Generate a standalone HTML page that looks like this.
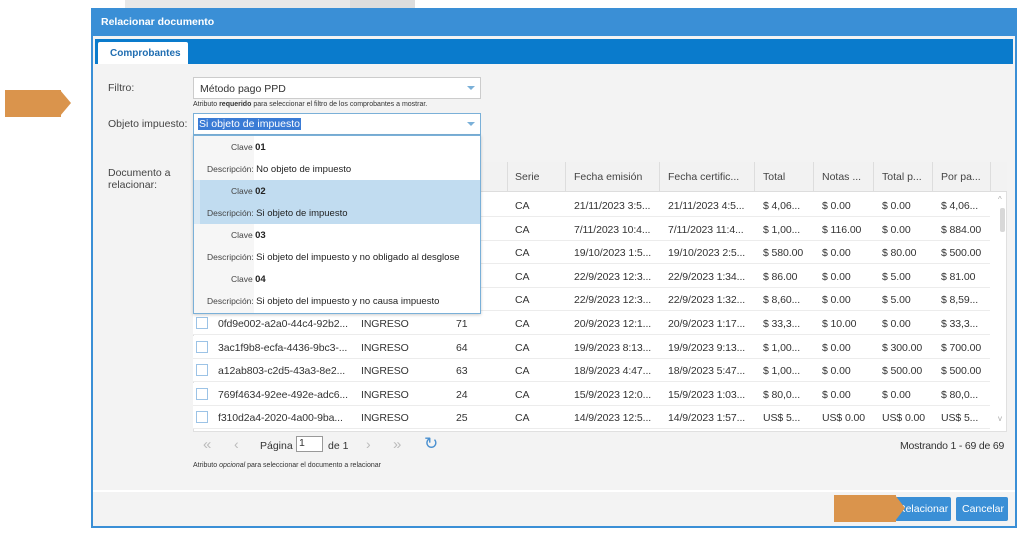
<!DOCTYPE html>
<html><head><meta charset="utf-8"><style>
*{margin:0;padding:0;box-sizing:border-box}
body{width:1024px;height:544px;background:#fff;font-family:"Liberation Sans",sans-serif;position:relative;overflow:hidden;color:#333}
.a{position:absolute;white-space:nowrap}
.dlg{left:91px;top:8px;width:926px;height:520px;background:#f3f3f3;border:2px solid #3a8fd6;border-top:none}
.t{font-size:10.5px}
.r{position:absolute;left:193px;width:797px;height:23px;border-bottom:1px solid #ececec;background:#fff;font-size:10.5px;letter-spacing:-0.1px}
.r span{position:absolute;top:6px}
.cb{position:absolute;left:3px;top:5px;width:12px;height:12px;border:1px solid #9cc3e6;background:#fff}
.h span{position:absolute;top:9px;font-size:10.5px;color:#444}
.dd{font-size:8.5px;color:#444}
.dd b,.dd span{color:#222}
</style></head><body>
<div class="a" style="left:5px;top:90px;width:56px;height:27px;background:#da944c"></div>
<div class="a" style="left:60px;top:90px;width:0;height:0;border-top:13.5px solid transparent;border-bottom:13.5px solid transparent;border-left:11px solid #da944c"></div>
<div class="a" style="left:125px;top:0;width:260px;height:8px;background:#e8e8e8"></div>
<div class="a" style="left:350px;top:0;width:65px;height:8px;background:#ddd"></div>
<div class="a dlg"></div>
<div class="a" style="left:91px;top:8px;width:926px;height:28px;background:#3a8fd6"></div>
<div class="a" style="left:101px;top:16px;color:#fff;font-size:10.5px;font-weight:bold">Relacionar documento</div>
<div class="a" style="left:95px;top:39px;width:918px;height:25px;background:#0a7bcc"></div>
<div class="a" style="left:98px;top:42px;width:90px;height:22px;background:#fff;border-radius:2px 2px 0 0"></div>
<div class="a" style="left:110px;top:48px;color:#1f6db1;font-size:10px;font-weight:bold">Comprobantes</div>

<div class="a t" style="left:108px;top:82px;color:#444">Filtro:</div>
<div class="a" style="left:193px;top:77px;width:288px;height:22px;background:#fff;border:1px solid #ccc"></div>
<div class="a t" style="left:200px;top:83px">Método pago PPD</div>
<div class="a" style="left:467px;top:86px;border-left:4px solid transparent;border-right:4px solid transparent;border-top:4px solid #7ab0d8"></div>
<div class="a" style="left:193px;top:101px;font-size:7px;color:#333">Atributo <b>requerido</b> para seleccionar el filtro de los comprobantes a mostrar.</div>
<div class="a t" style="left:108px;top:118px;color:#444">Objeto impuesto:</div>
<div class="a" style="left:193px;top:113px;width:288px;height:22px;background:#fff;border:1px solid #7ab0d8"></div>
<div class="a t" style="left:198px;top:118px;background:#3a7bd5;color:#fff;padding:0 1px">Si objeto de impuesto</div>
<div class="a" style="left:467px;top:122px;border-left:4px solid transparent;border-right:4px solid transparent;border-top:4px solid #7ab0d8"></div>
<div class="a t" style="left:108px;top:167px;color:#444;line-height:12px;white-space:normal;width:70px">Documento a relacionar:</div>

<div class="a" style="left:193px;top:162px;width:814px;height:270px;background:#fff;border:1px solid #e0e0e0"></div>
<div class="a h" style="left:193px;top:162px;width:814px;height:30px;background:#f2f2f2;border-bottom:1px solid #ddd">
<span style="left:322px">Serie</span><span style="left:381px">Fecha emisión</span><span style="left:475px">Fecha certific...</span><span style="left:570px">Total</span><span style="left:629px">Notas ...</span><span style="left:689px">Total p...</span><span style="left:748px">Por pa...</span>
</div>
<div class="a" style="left:507px;top:162px;width:1px;height:30px;background:#ddd"></div>
<div class="a" style="left:565px;top:162px;width:1px;height:30px;background:#ddd"></div>
<div class="a" style="left:659px;top:162px;width:1px;height:30px;background:#ddd"></div>
<div class="a" style="left:754px;top:162px;width:1px;height:30px;background:#ddd"></div>
<div class="a" style="left:813px;top:162px;width:1px;height:30px;background:#ddd"></div>
<div class="a" style="left:873px;top:162px;width:1px;height:30px;background:#ddd"></div>
<div class="a" style="left:932px;top:162px;width:1px;height:30px;background:#ddd"></div>
<div class="a" style="left:990px;top:162px;width:1px;height:30px;background:#ddd"></div>

<div class="r" style="top:194px"><span style="left:322px">CA</span><span style="left:381px">21/11/2023 3:5...</span><span style="left:475px">21/11/2023 4:5...</span><span style="left:570px">$ 4,06...</span><span style="left:629px">$ 0.00</span><span style="left:689px">$ 0.00</span><span style="left:748px">$ 4,06...</span></div>
<div class="r" style="top:218px"><span style="left:322px">CA</span><span style="left:381px">7/11/2023 10:4...</span><span style="left:475px">7/11/2023 11:4...</span><span style="left:570px">$ 1,00...</span><span style="left:629px">$ 116.00</span><span style="left:689px">$ 0.00</span><span style="left:748px">$ 884.00</span></div>
<div class="r" style="top:241px"><span style="left:322px">CA</span><span style="left:381px">19/10/2023 1:5...</span><span style="left:475px">19/10/2023 2:5...</span><span style="left:570px">$ 580.00</span><span style="left:629px">$ 0.00</span><span style="left:689px">$ 80.00</span><span style="left:748px">$ 500.00</span></div>
<div class="r" style="top:265px"><span style="left:322px">CA</span><span style="left:381px">22/9/2023 12:3...</span><span style="left:475px">22/9/2023 1:34...</span><span style="left:570px">$ 86.00</span><span style="left:629px">$ 0.00</span><span style="left:689px">$ 5.00</span><span style="left:748px">$ 81.00</span></div>
<div class="r" style="top:288px"><span style="left:322px">CA</span><span style="left:381px">22/9/2023 12:3...</span><span style="left:475px">22/9/2023 1:32...</span><span style="left:570px">$ 8,60...</span><span style="left:629px">$ 0.00</span><span style="left:689px">$ 5.00</span><span style="left:748px">$ 8,59...</span></div>
<div class="r" style="top:312px"><i class="cb"></i><span style="left:25px">0fd9e002-a2a0-44c4-92b2...</span><span style="left:168px">INGRESO</span><span style="left:263px">71</span><span style="left:322px">CA</span><span style="left:381px">20/9/2023 12:1...</span><span style="left:475px">20/9/2023 1:17...</span><span style="left:570px">$ 33,3...</span><span style="left:629px">$ 10.00</span><span style="left:689px">$ 0.00</span><span style="left:748px">$ 33,3...</span></div>
<div class="r" style="top:336px"><i class="cb"></i><span style="left:25px">3ac1f9b8-ecfa-4436-9bc3-...</span><span style="left:168px">INGRESO</span><span style="left:263px">64</span><span style="left:322px">CA</span><span style="left:381px">19/9/2023 8:13...</span><span style="left:475px">19/9/2023 9:13...</span><span style="left:570px">$ 1,00...</span><span style="left:629px">$ 0.00</span><span style="left:689px">$ 300.00</span><span style="left:748px">$ 700.00</span></div>
<div class="r" style="top:359px"><i class="cb"></i><span style="left:25px">a12ab803-c2d5-43a3-8e2...</span><span style="left:168px">INGRESO</span><span style="left:263px">63</span><span style="left:322px">CA</span><span style="left:381px">18/9/2023 4:47...</span><span style="left:475px">18/9/2023 5:47...</span><span style="left:570px">$ 1,00...</span><span style="left:629px">$ 0.00</span><span style="left:689px">$ 500.00</span><span style="left:748px">$ 500.00</span></div>
<div class="r" style="top:383px"><i class="cb"></i><span style="left:25px">769f4634-92ee-492e-adc6...</span><span style="left:168px">INGRESO</span><span style="left:263px">24</span><span style="left:322px">CA</span><span style="left:381px">15/9/2023 12:0...</span><span style="left:475px">15/9/2023 1:03...</span><span style="left:570px">$ 80,0...</span><span style="left:629px">$ 0.00</span><span style="left:689px">$ 0.00</span><span style="left:748px">$ 80,0...</span></div>
<div class="r" style="top:406px"><i class="cb"></i><span style="left:25px">f310d2a4-2020-4a00-9ba...</span><span style="left:168px">INGRESO</span><span style="left:263px">25</span><span style="left:322px">CA</span><span style="left:381px">14/9/2023 12:5...</span><span style="left:475px">14/9/2023 1:57...</span><span style="left:570px">US$ 5...</span><span style="left:629px">US$ 0.00</span><span style="left:689px">US$ 0.00</span><span style="left:748px">US$ 5...</span></div>
<div class="a" style="left:998px;top:195px;font-size:8px;color:#aaa">^</div>
<div class="a" style="left:1000px;top:208px;width:5px;height:24px;background:#d8d8d8;border-radius:2px"></div>
<div class="a" style="left:998px;top:414px;font-size:8px;color:#aaa">v</div>

<div class="a" style="left:203px;top:436px;font-size:15px;color:#bbb">«</div>
<div class="a" style="left:234px;top:436px;font-size:14px;color:#bbb">‹</div>
<div class="a t" style="left:260px;top:440px">Página</div>
<div class="a" style="left:296px;top:436px;width:27px;height:16px;background:#fff;border:1px solid #999;font-size:10.5px;padding-left:2px">1</div>
<div class="a t" style="left:328px;top:440px">de 1</div>
<div class="a" style="left:366px;top:436px;font-size:14px;color:#bbb">›</div>
<div class="a" style="left:393px;top:436px;font-size:15px;color:#bbb">»</div>
<div class="a" style="left:424px;top:434px;font-size:17px;color:#4a90d0">↻</div>
<div class="a t" style="left:900px;top:440px;letter-spacing:-0.2px">Mostrando 1 - 69 de 69</div>
<div class="a" style="left:193px;top:462px;font-size:7px">Atributo <i>opcional</i> para seleccionar el documento a relacionar</div>

<div class="a" style="left:93px;top:490px;width:922px;height:2px;background:#fff"></div>
<div class="a" style="left:895px;top:497px;width:56px;height:24px;background:#3a8fd6;border-radius:2px;color:#fff;font-size:10.5px;padding:6px 0 0 3px">Relacionar</div>
<div class="a" style="left:956px;top:497px;width:52px;height:24px;background:#3a8fd6;border-radius:2px;color:#fff;font-size:10.5px;padding:6px 0 0 6px">Cancelar</div>
<div class="a" style="left:834px;top:495px;width:62px;height:27px;background:#da944c"></div>
<div class="a" style="left:895px;top:495px;border-top:13.5px solid transparent;border-bottom:13.5px solid transparent;border-left:10px solid #da944c"></div>

<div class="a" style="left:193px;top:135px;width:288px;height:179px;background:#fff;border:1px solid #7ab0d8;box-shadow:0 1px 3px rgba(0,0,0,.2)"></div>
<div class="a" style="left:194px;top:136px;width:60px;height:177px;background:#f6f6f6"></div>
<div class="a" style="left:200px;top:180px;width:280px;height:44px;background:#c1dcf0"></div>
<div class="a" style="left:194px;top:180px;width:6px;height:44px;background:#d8e8f4"></div>
<div class="a dd" style="left:231px;top:142px">Clave <b style="font-size:9.5px">01</b></div>
<div class="a dd" style="left:207px;top:164px">Descripción: <span style="font-size:9.5px">No objeto de impuesto</span></div>
<div class="a dd" style="left:231px;top:186px">Clave <b style="font-size:9.5px">02</b></div>
<div class="a dd" style="left:207px;top:208px">Descripción: <span style="font-size:9.5px">Si objeto de impuesto</span></div>
<div class="a dd" style="left:231px;top:230px">Clave <b style="font-size:9.5px">03</b></div>
<div class="a dd" style="left:207px;top:252px">Descripción: <span style="font-size:9.5px">Si objeto del impuesto y no obligado al desglose</span></div>
<div class="a dd" style="left:231px;top:274px">Clave <b style="font-size:9.5px">04</b></div>
<div class="a dd" style="left:207px;top:296px">Descripción: <span style="font-size:9.5px">Si objeto del impuesto y no causa impuesto</span></div>
</body></html>
